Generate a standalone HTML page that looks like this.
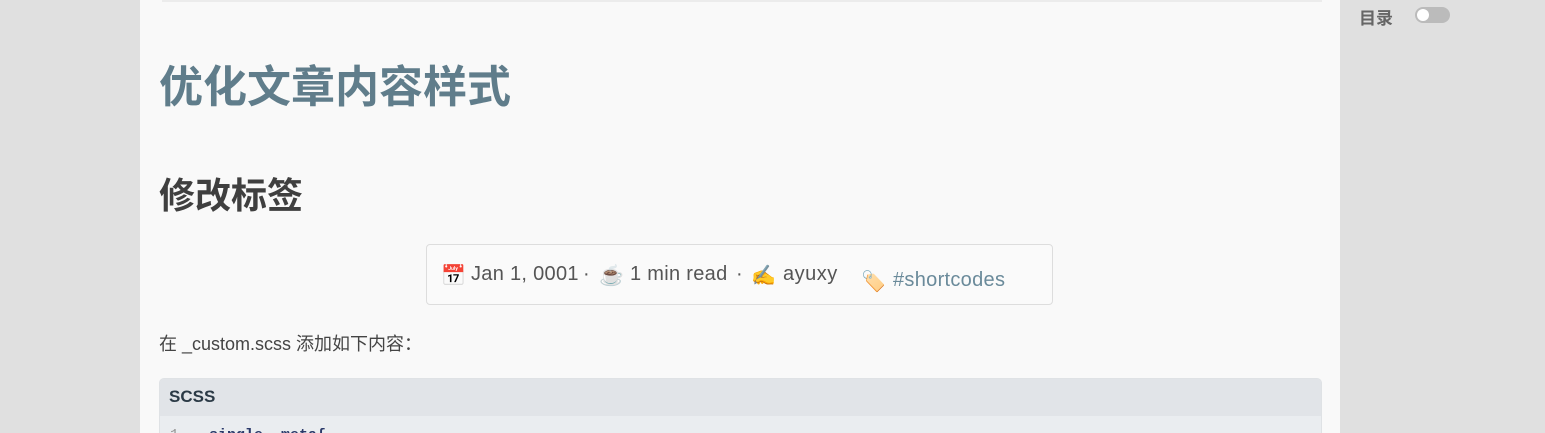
<!DOCTYPE html>
<html><head><meta charset="utf-8"><style>
*{margin:0;padding:0;box-sizing:border-box}
html,body{width:1545px;height:433px;overflow:hidden;background:#e0e0e0;font-family:"Liberation Sans","Noto Sans CJK SC",sans-serif}
.main{position:absolute;left:140px;top:0;width:1200px;height:433px;background:#f9f9f9;overflow:hidden}
.topline{position:absolute;left:22px;top:0;width:1160px;height:2px;background:#ececec}
h1{position:absolute;left:19px;top:58px;font-size:44px;font-weight:bold;color:#607d8b;line-height:60px;white-space:nowrap}
h2{position:absolute;left:19px;top:172px;font-size:36px;font-weight:bold;color:#3f3f3f;line-height:48px;white-space:nowrap}
.meta{position:absolute;left:286px;top:244px;width:627px;height:61px;border:1px solid #ddd;border-radius:4px;background:#fafafa;font-size:20px;color:#555}
.meta span{position:absolute;white-space:nowrap;top:18px}
.meta .e{font-size:20px}
.p{position:absolute;left:19px;top:330px;font-size:18px;color:#444;white-space:nowrap}
.code{position:absolute;left:19px;top:378px;width:1163px;height:70px;border:1px solid #dfe2e5;border-radius:5px;background:#eaedf0;overflow:hidden}
.code .hd{height:37px;background:#e1e4e8;font-weight:bold;font-size:17px;color:#2b3a46;padding:8px 0 0 9px}
.code .ln{font-family:"Liberation Mono",monospace;font-size:15px;color:#999;padding:11px 0 0 10px;white-space:pre;position:relative}
.code .ln b{color:#2b3a6a;position:absolute;left:40px;top:11px}
.side{position:absolute;left:1359px;top:4px;font-size:17px;font-weight:bold;color:#666}
.tog{position:absolute;left:1415px;top:7px;width:35px;height:16px;border-radius:8px;background:#bbb}
.tog i{position:absolute;left:2px;top:2px;width:12px;height:12px;border-radius:50%;background:#fff}
</style></head><body>
<div class="main">
<div class="topline"></div>
<h1>优化文章内容样式</h1>
<h2>修改标签</h2>
<div class="meta">
<span class="e" style="left:14px">📅</span>
<span style="left:44px;letter-spacing:0.3px">Jan 1, 0001</span>
<span style="left:156px">·</span>
<span class="e" style="left:172px">☕</span>
<span style="left:203px;letter-spacing:0.3px">1 min read</span>
<span style="left:309px">·</span>
<span class="e" style="left:324px">✍️</span>
<span style="left:356px;letter-spacing:0.5px">ayuxy</span>
<span class="e" style="left:434px;top:24px">🏷️</span>
<span style="left:466px;top:24px;color:#6a8a9a;letter-spacing:0.3px">#shortcodes</span>
</div>
<div class="p">在 _custom.scss 添加如下内容：</div>
<div class="code"><div class="hd">SCSS</div><div class="ln">1<b>.single .meta{</b></div></div>
</div>
<div class="side">目录</div>
<div class="tog"><i></i></div>
</body></html>
